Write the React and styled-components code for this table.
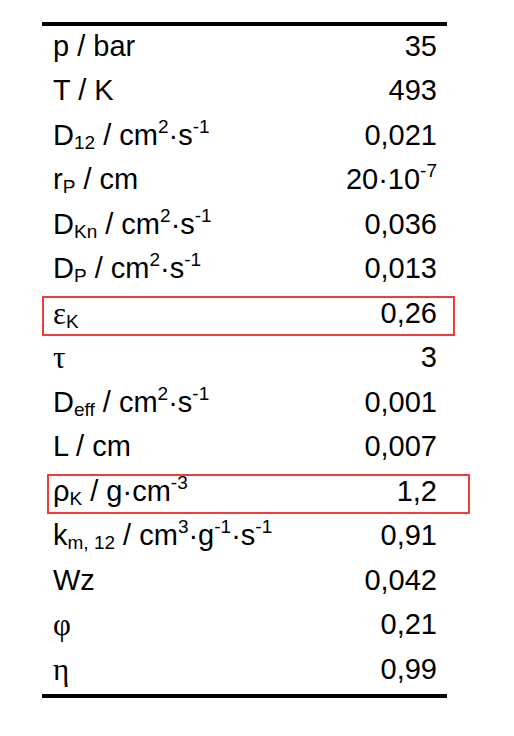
import styled, { createGlobalStyle } from "styled-components";

const GlobalStyle = createGlobalStyle`
  html, body {
    margin: 0;
    padding: 0;
    background: #ffffff;
  }
  body {
    font-family: "Liberation Sans", Arial, sans-serif;
    color: #000000;
  }
`;

const Page = styled.div`
  width: 514px;
  height: 736px;
  padding: 22px 0 0 42px;
  box-sizing: border-box;
`;

const Table = styled.div`
  width: 405px;
  border-top: 4px solid #000;
  border-bottom: 4px solid #000;
  display: flex;
  flex-direction: column;
`;

const Row = styled.div`
  position: relative;
  height: 44.5px;
  display: flex;
  align-items: center;
  justify-content: space-between;
  padding: 0 10px 4px 11px;
  box-sizing: border-box;
  font-size: 29px;
  line-height: 1;
`;

const Label = styled.span`
  white-space: nowrap;
`;

const Value = styled.span`
  white-space: nowrap;
`;

const Greek = styled.span`
  font-family: ${(p) => (p.$serif ? '"Liberation Serif", "Times New Roman", serif' : "inherit")};
  font-size: ${(p) => (p.$serif ? "31px" : "inherit")};
`;

const Sub = styled.sub`
  font-size: 19px;
  line-height: 0;
  vertical-align: -4px;
`;

const Sup = styled.sup`
  font-size: 19px;
  line-height: 0;
  vertical-align: 12px;
`;

const Highlight = styled.div`
  position: absolute;
  top: 3px;
  left: ${(p) => p.$left}px;
  width: ${(p) => p.$width}px;
  height: 40px;
  border: 2px solid #f23b3b;
  box-sizing: border-box;
  pointer-events: none;
`;

const rows = [
  { label: <>p / bar</>, value: "35" },
  { label: <>T / K</>, value: "493" },
  { label: <>D<Sub>12</Sub> / cm<Sup>2</Sup>·s<Sup>-1</Sup></>, value: "0,021" },
  { label: <>r<Sub>P</Sub> / cm</>, value: <>20·10<Sup>-7</Sup></> },
  { label: <>D<Sub>Kn</Sub> / cm<Sup>2</Sup>·s<Sup>-1</Sup></>, value: "0,036" },
  { label: <>D<Sub>P</Sub> / cm<Sup>2</Sup>·s<Sup>-1</Sup></>, value: "0,013" },
  { label: <><Greek $serif>ε</Greek><Sub>K</Sub></>, value: "0,26", box: { left: 0, width: 413 } },
  { label: <><Greek $serif>τ</Greek></>, value: "3" },
  { label: <>D<Sub>eff</Sub> / cm<Sup>2</Sup>·s<Sup>-1</Sup></>, value: "0,001" },
  { label: <>L / cm</>, value: "0,007" },
  { label: <><Greek>ρ</Greek><Sub>K</Sub> / g·cm<Sup>-3</Sup></>, value: "1,2", box: { left: 5, width: 423 } },
  { label: <>k<Sub>m, 12</Sub> / cm<Sup>3</Sup>·g<Sup>-1</Sup>·s<Sup>-1</Sup></>, value: "0,91" },
  { label: <>Wz</>, value: "0,042" },
  { label: <><Greek $serif>φ</Greek></>, value: "0,21" },
  { label: <><Greek $serif>η</Greek></>, value: "0,99" },
];

export default function App() {
  return (
    <>
      <GlobalStyle />
      <Page>
        <Table>
          {rows.map((r, i) => (
            <Row key={i}>
              <Label>{r.label}</Label>
              <Value>{r.value}</Value>
              {r.box && <Highlight $left={r.box.left} $width={r.box.width} />}
            </Row>
          ))}
        </Table>
      </Page>
    </>
  );
}
